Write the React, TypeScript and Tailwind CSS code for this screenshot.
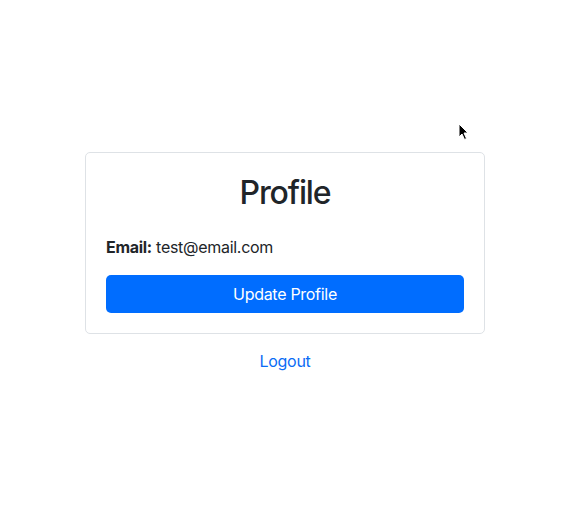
export default function App() {
  return (
    <div
      className="relative w-[570px] h-[526px] bg-white text-[#212529]"
      style={{ fontFamily: 'Inter, "Liberation Sans", sans-serif' }}
    >
      <div className="flex flex-col items-center pt-[152px]">
        <div className="w-[400px] border border-[#dee2e6] rounded-[5px] px-[20px] pt-[21px] pb-[20px]">
          <h2 className="text-[32px] leading-[38px] font-medium text-center mb-[23px] tracking-[-0.035em]">Profile</h2>
          <p className="text-[16px] leading-[24px] mb-[16px] tracking-[-0.018em]">
            <span className="font-bold">Email:</span> test@email.com
          </p>
          <button className="w-full h-[38px] rounded-[5px] bg-[#006dff] text-white text-[16px] leading-[24px] tracking-[-0.018em]">
            Update Profile
          </button>
        </div>
        <a className="mt-[15px] text-[16px] leading-[24px] text-[#0a6cf5] tracking-[-0.018em]">Logout</a>
      </div>
      <svg
        className="absolute left-[458px] top-[123px]"
        width="12"
        height="18"
        viewBox="0 0 12 18"
      >
        <path d="M1 1 L1 14 L4 11 L6.5 16.5 L8.5 15.5 L6 10 L10 10 Z" fill="#000" stroke="#fff" strokeWidth="1" />
      </svg>
    </div>
  );
}
